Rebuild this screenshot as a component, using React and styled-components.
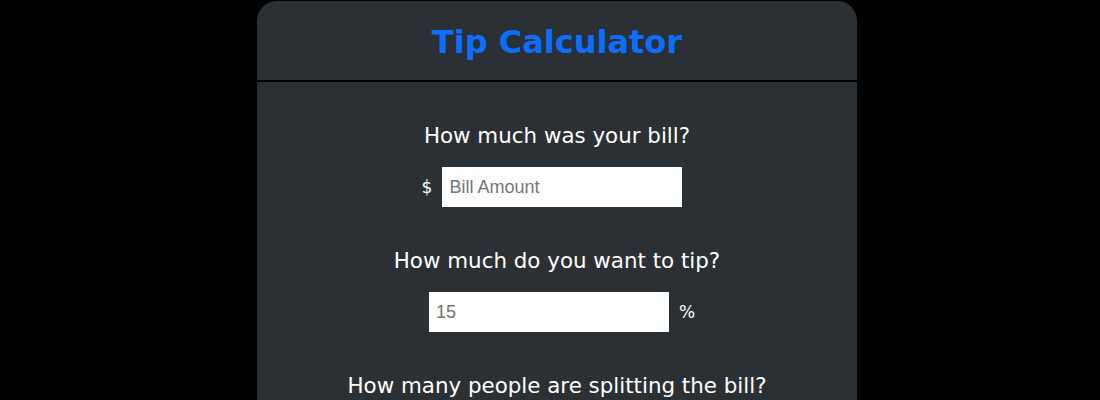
import React, { useState } from 'react';
import styled, { createGlobalStyle } from 'styled-components';

const GlobalStyle = createGlobalStyle`
  html, body {
    margin: 0;
    padding: 0;
    background: #000;
  }
  * {
    box-sizing: border-box;
  }
`;

const Page = styled.div`
  min-height: 400px;
  display: flex;
  justify-content: center;
  align-items: flex-start;
  padding: 1px 0 0 14px;
`;

const Card = styled.div`
  width: 600px;
  background: #2b3035;
  border-radius: 20px 20px 0 0;
  font-family: "DejaVu Sans", Verdana, sans-serif;
  color: #fff;
`;

const Header = styled.header`
  height: 81px;
  padding-top: 2px;
  border-bottom: 2px solid #000;
  display: flex;
  align-items: center;
  justify-content: center;
`;

const Title = styled.h1`
  margin: 0;
  font-size: 32px;
  font-weight: bold;
  color: #0d6efd;
`;

const Body = styled.div`
  padding-top: 21px;
`;

const Group = styled.div`
  padding: 20px 0 21px;
  text-align: center;
`;

const Label = styled.p`
  margin: 0 0 19px;
  font-size: 21.4px;
  line-height: 25px;
`;

const Row = styled.div`
  display: flex;
  align-items: center;
  justify-content: center;
  height: 40px;
`;

const Unit = styled.span`
  font-size: 17px;
`;

const Input = styled.input`
  width: 240px;
  height: 40px;
  margin: 0 10px;
  padding: 0 7px;
  border: none;
  outline: none;
  background: #fff;
  font-family: "Liberation Sans", Arial, sans-serif;
  font-size: 18px;
  color: #212529;

  &::placeholder {
    color: #757575;
  }
`;

export default function App() {
  const [bill, setBill] = useState('');
  const [tip, setTip] = useState('');
  const [people, setPeople] = useState('');

  return (
    <Page>
      <GlobalStyle />
      <Card>
        <Header>
          <Title>Tip Calculator</Title>
        </Header>
        <Body>
          <Group>
            <Label>How much was your bill?</Label>
            <Row>
              <Unit>$</Unit>
              <Input
                type="text"
                placeholder="Bill Amount"
                value={bill}
                onChange={e => setBill(e.target.value)}
              />
            </Row>
          </Group>
          <Group>
            <Label>How much do you want to tip?</Label>
            <Row>
              <Input
                type="text"
                placeholder="15"
                value={tip}
                onChange={e => setTip(e.target.value)}
              />
              <Unit>%</Unit>
            </Row>
          </Group>
          <Group>
            <Label>How many people are splitting the bill?</Label>
            <Row>
              <Input
                type="text"
                placeholder="1"
                value={people}
                onChange={e => setPeople(e.target.value)}
              />
            </Row>
          </Group>
        </Body>
      </Card>
    </Page>
  );
}
